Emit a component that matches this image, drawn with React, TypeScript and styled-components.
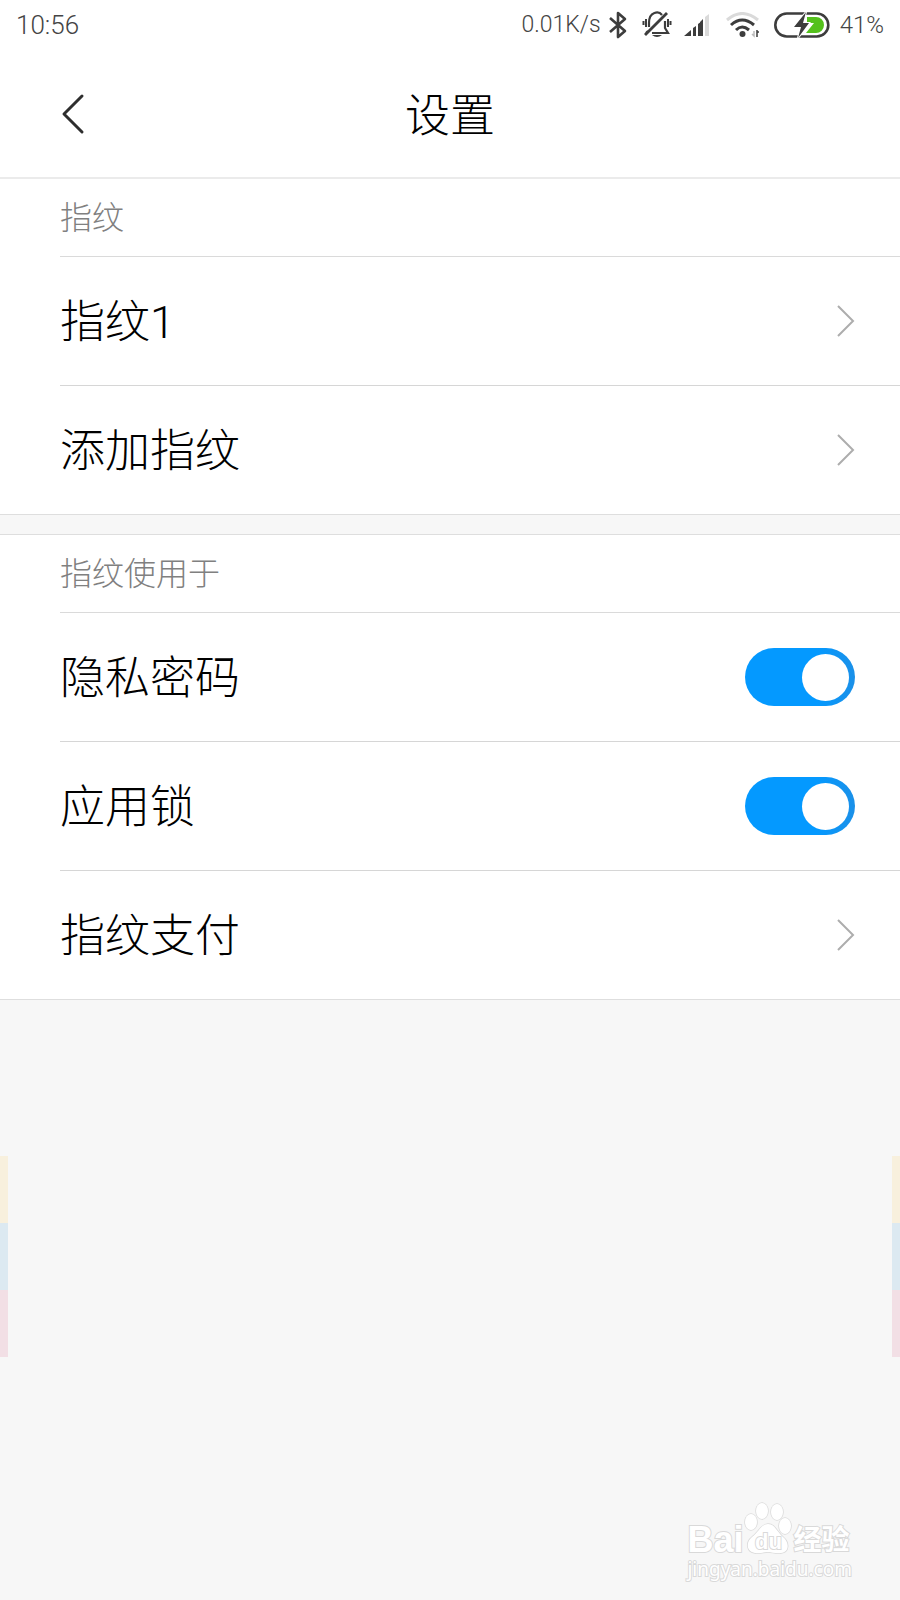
import React from 'react';
import styled, { createGlobalStyle } from 'styled-components';

const GlobalStyle = createGlobalStyle`
  *, *::before, *::after { box-sizing: border-box; }
  body {
    margin: 0;
    background: #f7f7f7;
    color: #000;
    font-family: Roboto, "Noto Sans CJK SC", sans-serif;
    font-weight: 300;
  }
`;

const Screen = styled.div`
  display: flex;
  flex-direction: column;
  min-height: 100vh;
`;

const StatusBar = styled.div`
  display: flex;
  justify-content: space-between;
  align-items: center;
  height: 50px;
  padding: 0 16px;
  background: #fff;
  color: #444;
  line-height: 28px;
`;

const StatusItems = styled.div`
  display: flex;
  align-items: center;
`;

const Clock = styled.span`
  font-size: 26px;
`;

const NetworkSpeed = styled.span`
  font-size: 23px;
  line-height: 30px;
`;

const StatusIcon = styled.svg<{ $gap: number }>`
  display: block;
  flex: none;
  margin-left: ${(p) => p.$gap}px;
`;

const BatteryLevel = styled.span`
  margin-left: 10px;
  font-size: 24px;
`;

const Header = styled.header`
  display: grid;
  grid-template-columns: 60px 1fr 60px;
  align-items: center;
  height: 129px;
  padding: 0 45px;
  background: #fff;
  border-bottom: 2px solid #ebebeb;
`;

const BackButton = styled.button`
  display: flex;
  align-items: center;
  height: 60px;
  padding: 0 16px;
  border: 0;
  background: none;
`;

const Title = styled.h1`
  margin: 0;
  padding-top: 6px;
  font-size: 45px;
  font-weight: 300;
  line-height: 64px;
  text-align: center;
`;

const Section = styled.section`
  padding-left: 60px;
  background: #fff;
  border-bottom: 1px solid #dedede;

  & + & {
    margin-top: 19px;
    border-top: 1px solid #dedede;
  }
`;

const SectionTitle = styled.h2`
  height: 78px;
  margin: 0;
  border-bottom: 1px solid #dadada;
  color: #808080;
  font-size: 32px;
  font-weight: 300;
  line-height: 78px;
`;

const List = styled.ul`
  margin: 0;
  padding: 0;
  list-style: none;
`;

const Item = styled.li`
  & + & { border-top: 1px solid #d6d6d6; }
`;

const rowLayout = `
  display: flex;
  align-items: center;
  justify-content: space-between;
  width: 100%;
  height: 128px;
  padding: 0 45px 0 0;
  font-size: 45px;
  line-height: 64px;
`;

const LinkRow = styled.button`
  ${rowLayout}
  border: 0;
  background: none;
  color: inherit;
  font-family: inherit;
  font-weight: inherit;
  text-align: left;
`;

const SwitchRow = styled.label`
  ${rowLayout}
`;

const RowText = styled.span`
  padding-top: 4px;
`;

const Switch = styled.input`
  display: flex;
  flex: none;
  align-items: center;
  width: 110px;
  height: 58px;
  margin: 0;
  padding: 0 6px;
  border-radius: 29px;
  background: #ccc;
  appearance: none;

  &::before {
    content: '';
    width: 47px;
    height: 47px;
    border-radius: 50%;
    background: #fff;
  }

  &:checked { background: linear-gradient(90deg, #0499ff 65%, #1b90e8); }
  &:checked::before { margin-left: auto; }
`;

const EdgeStrip = styled.div<{ $side: 'left' | 'right' }>`
  position: fixed;
  bottom: 243px;
  ${(p) => p.$side}: 0;
  width: 8px;
`;

const EdgeBlock = styled.div<{ $color: string }>`
  height: 67px;
  background: ${(p) => p.$color};
`;

const Watermark = styled.footer`
  align-self: flex-end;
  margin: auto 48px 18px 0;
  color: #fff;
  paint-order: stroke fill;
  -webkit-text-stroke: 2px #d9d9d9;
`;

const Logo = styled.div`
  display: flex;
  align-items: flex-end;
  height: 52px;
`;

const Latin = styled.span`
  font-family: "Liberation Sans", sans-serif;
  font-size: 36px;
  font-weight: 700;
  line-height: 28px;
`;

const PawMark = styled.span`
  display: grid;
  place-items: end center;
  margin: 0 1px;

  > * { grid-area: 1 / 1; }
`;

const PawText = styled.span`
  z-index: 1;
  font-family: "Liberation Sans", sans-serif;
  font-size: 22px;
  font-weight: 700;
  line-height: 24px;
`;

const Brand = styled.span`
  font-family: "Noto Sans CJK SC", sans-serif;
  font-size: 28px;
  font-weight: 700;
  line-height: 32px;
`;

const Site = styled.div`
  padding-top: 2px;
  font-family: "Noto Sans", sans-serif;
  font-size: 19px;
  font-weight: 400;
  line-height: 26px;
`;

const Chevron = () => (
  <svg width="20" height="34" viewBox="0 0 20 34" fill="none" stroke="#adadad" strokeWidth="2" aria-hidden="true">
    <path d="M3 2 L18 17 L3 32" />
  </svg>
);

const BluetoothIcon = () => (
  <StatusIcon $gap={7} width="20" height="28" viewBox="0 0 20 28" fill="none" stroke="#3d3d3d" strokeWidth="2.6" strokeLinejoin="round">
    <path d="M2 7 L17 20 L10 26 V2 L17 8 L2 21" />
  </StatusIcon>
);

const MutedBellIcon = () => (
  <StatusIcon $gap={14} width="30" height="28" viewBox="0 0 30 28" fill="none" stroke="#3d3d3d" strokeWidth="2.2">
    <path d="M7 16 V12 C7 0 17 0 20 4 M23 10 V17 L26 22 H10 M4 22 L6 20" />
    <path d="M3 24 L25 2" strokeWidth="2.8" />
    <path d="M4 8 V16 M1.500 10 V14 M26 8 V16 M28.500 10 V14" strokeWidth="2" />
    <path d="M10 24 H20 Q15 28 10 24" fill="#3d3d3d" stroke="none" />
  </StatusIcon>
);

const SignalIcon = () => (
  <StatusIcon $gap={12} width="26" height="24" viewBox="0 0 26 24" fill="#3d3d3d">
    <path d="M0 23 L7 17 V23 Z M9 15 L12 13 V23 H9 Z M14 11 L18 8 V23 H14 Z M16 9 L19 6 V23 H16 Z" />
    <path d="M21 4 L25 1 V23 H21 Z" fill="#dadada" />
  </StatusIcon>
);

const WifiIcon = () => (
  <StatusIcon $gap={16} width="34" height="26" viewBox="0 0 34 26" fill="none" stroke="#3d3d3d" strokeWidth="3">
    <path d="M1 8 Q16 -5 32 8" stroke="#dadada" />
    <path d="M5 13 Q16 3 28 13 M10 18 Q16 12 23 18" />
    <circle cx="16.500" cy="22" r="3" fill="#3d3d3d" stroke="none" />
    <path d="M31 18 V25 M33 20 H31" strokeWidth="1.500" />
    <path d="M28 19 V24 L26 22" stroke="#bbb" strokeWidth="1.500" />
  </StatusIcon>
);

const BatteryIcon = () => (
  <StatusIcon $gap={14} width="56" height="28" viewBox="0 0 56 28" fill="none">
    <rect x="1.300" y="2.500" width="53" height="23" rx="11.500" stroke="#3d3d3d" strokeWidth="2.600" />
    <path d="M33 6 H42 A8 8 0 0 1 42 22 H32 L40 12 H33 Z" fill="#54c11c" />
    <path d="M32 1 L20 16 H27 L24 27 L35 12 H29 Z" fill="#3d3d3d" stroke="#fff" strokeWidth="2" paintOrder="stroke" />
  </StatusIcon>
);

const PawIcon = () => (
  <svg width="48" height="52" viewBox="0 0 48 52" fill="#fff" stroke="#d9d9d9" strokeWidth="1.500" aria-hidden="true">
    <ellipse cx="7" cy="20" rx="6" ry="8" />
    <ellipse cx="18" cy="9" rx="6" ry="8" />
    <ellipse cx="33" cy="10" rx="6" ry="8" />
    <ellipse cx="41" cy="24" rx="6" ry="8" />
    <path d="M24 22 C17 22 15 30 8 35 C1 41 3 50 11 51 C16 52 20 50 24 50 C28 50 32 52 37 51 C45 50 46 41 39 35 C33 30 31 22 24 22 Z" />
  </svg>
);

const edgeColors = ['#f8f0dd', '#dce9f1', '#f2dfe5'];

const Edge = ({ side }: { side: 'left' | 'right' }) => (
  <EdgeStrip $side={side} aria-hidden="true">
    {edgeColors.map((color) => <EdgeBlock key={color} $color={color} />)}
  </EdgeStrip>
);

const NavItem = ({ text }: { text: string }) => (
  <Item>
    <LinkRow type="button"><RowText>{text}</RowText><Chevron /></LinkRow>
  </Item>
);

const SwitchItem = ({ id, text }: { id: string; text: string }) => (
  <Item>
    <SwitchRow htmlFor={id}>
      <RowText>{text}</RowText>
      <Switch id={id} type="checkbox" role="switch" defaultChecked />
    </SwitchRow>
  </Item>
);

export default function App() {
  return (
    <Screen>
      <GlobalStyle />
      <StatusBar>
        <Clock>10:56</Clock>
        <StatusItems>
          <NetworkSpeed>0.01K/s</NetworkSpeed>
          <BluetoothIcon />
          <MutedBellIcon />
          <SignalIcon />
          <WifiIcon />
          <BatteryIcon />
          <BatteryLevel>41%</BatteryLevel>
        </StatusItems>
      </StatusBar>
      <Header>
        <BackButton type="button" aria-label="返回">
          <svg width="24" height="42" viewBox="0 0 24 42" fill="none" stroke="#2e2e2e" strokeWidth="3" strokeLinecap="round" strokeLinejoin="round">
            <path d="M21 3 L3 21 L21 39" />
          </svg>
        </BackButton>
        <Title>设置</Title>
      </Header>
      <main>
        <Section>
          <SectionTitle>指纹</SectionTitle>
          <List>
            <NavItem text="指纹1" />
            <NavItem text="添加指纹" />
          </List>
        </Section>
        <Section>
          <SectionTitle>指纹使用于</SectionTitle>
          <List>
            <SwitchItem id="privacy-password" text="隐私密码" />
            <SwitchItem id="app-lock" text="应用锁" />
            <NavItem text="指纹支付" />
          </List>
        </Section>
      </main>
      <Watermark>
        <Logo>
          <Latin>Bai</Latin>
          <PawMark>
            <PawIcon />
            <PawText>du</PawText>
          </PawMark>
          <Brand>经验</Brand>
        </Logo>
        <Site>jingyan.baidu.com</Site>
      </Watermark>
      <Edge side="left" />
      <Edge side="right" />
    </Screen>
  );
}
